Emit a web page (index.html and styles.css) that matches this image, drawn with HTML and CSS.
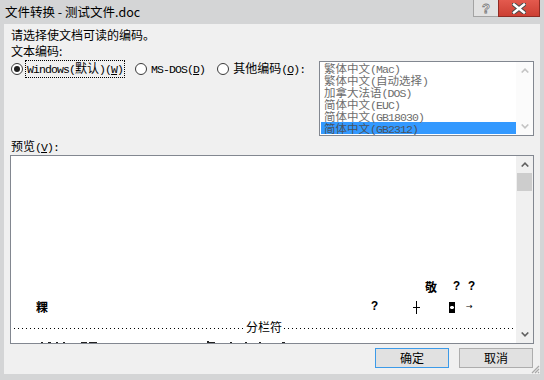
FILE: index.html
```html
<!DOCTYPE html>
<html>
<head>
    <meta charset="utf-8">
    <title>文件转换</title>
    <link rel="stylesheet" href="styles.css">
</head>
<body>
    <div class="window">
        <div class="titlebar">
            <span class="title">文件转换 - 测试文件.doc</span>
            <div class="caption-buttons">
                <span class="help">?</span>
                <span class="close">
                    <svg width="14" height="11" viewBox="0 0 14 11">
                        <path d="M2 1.5 L12 9.5 M12 1.5 L2 9.5" stroke="#4a4a4a" stroke-width="4.4" stroke-linecap="square"/>
                        <path d="M2 1.5 L12 9.5 M12 1.5 L2 9.5" stroke="#fff" stroke-width="2.4" stroke-linecap="square"/>
                    </svg>
                </span>
            </div>
        </div>

        <div class="client">
            <p class="line">请选择使文档可读的编码。</p>
            <p class="line">文本编码:</p>

            <div class="encoding-row">
                <div class="radios">
                    <label class="radio checked">
                        <span class="circle"></span>
                        <span class="text focus"><span class="en">Windows(</span>默认<span class="en">)(<u>W</u>)</span></span>
                    </label>
                    <label class="radio">
                        <span class="circle"></span>
                        <span class="text"><span class="en">MS-DOS(<u>D</u>)</span></span>
                    </label>
                    <label class="radio">
                        <span class="circle"></span>
                        <span class="text">其他编码<span class="en">(<u>O</u>):</span></span>
                    </label>
                </div>

                <div class="listbox">
                    <div class="items">
                        <div class="item">繁体中文<span class="en">(Mac)</span></div>
                        <div class="item">繁体中文<span class="en">(</span>自动选择<span class="en">)</span></div>
                        <div class="item">加拿大法语<span class="en">(DOS)</span></div>
                        <div class="item">简体中文<span class="en">(EUC)</span></div>
                        <div class="item">简体中文<span class="en">(GB18030)</span></div>
                        <div class="item selected">简体中文<span class="en">(GB2312)</span></div>
                    </div>
                    <div class="scrollbar disabled">
                        <span class="sb-btn"><svg width="8" height="5" viewBox="0 0 8 5"><path d="M0.7 4.5 L4 1.2 L7.3 4.5" fill="none" stroke="currentColor" stroke-width="1.6"/></svg></span>
                        <span class="sb-btn"><svg width="8" height="5" viewBox="0 0 8 5"><path d="M0.7 0.5 L4 3.8 L7.3 0.5" fill="none" stroke="currentColor" stroke-width="1.6"/></svg></span>
                    </div>
                </div>
            </div>

            <p class="line preview-label">预览<span class="en">(<u>V</u>):</span></p>

            <div class="preview">
                <div class="page">
                    <div class="row">
                        <span class="cj jing">敬</span>
                        <span class="hw q1">?</span>
                        <span class="hw q2">?</span>
                    </div>
                    <div class="row">
                        <span class="cj guo">粿</span>
                        <span class="hw q3">?</span>
                        <span class="cross"></span>
                        <span class="mark"></span>
                        <span class="hw arrow">→</span>
                    </div>
                    <div class="row break">
                        <span class="dots"></span>
                        <span class="break-label">分栏符</span>
                        <span class="dots"></span>
                    </div>
                    <div class="row clipped">
                        <span class="frag f1"></span>
                        <span class="frag f2"></span>
                        <span class="frag f3"></span>
                        <span class="frag f4"></span>
                        <span class="frag f5"></span>
                        <span class="frag f6"></span>
                        <span class="frag f7 tall"></span>
                        <span class="frag f8"></span>
                        <span class="frag f9"></span>
                        <span class="frag f10"></span>
                        <span class="frag f11"></span>
                        <span class="frag f12"></span>
                    </div>
                </div>
                <div class="scrollbar">
                    <span class="sb-btn"><svg width="8" height="5" viewBox="0 0 8 5"><path d="M0.7 4.5 L4 1.2 L7.3 4.5" fill="none" stroke="currentColor" stroke-width="1.6"/></svg></span>
                    <span class="thumb"></span>
                    <span class="sb-track"></span>
                    <span class="sb-btn"><svg width="8" height="5" viewBox="0 0 8 5"><path d="M0.7 0.5 L4 3.8 L7.3 0.5" fill="none" stroke="currentColor" stroke-width="1.6"/></svg></span>
                </div>
            </div>

            <div class="buttons">
                <button class="btn default">确定</button>
                <button class="btn">取消</button>
            </div>

            <svg class="grip" width="10" height="10" viewBox="0 0 10 10">
                <path d="M9 2 L2 9 M9 5 L5 9 M9 8 L8 9" stroke="#a8a8a8" stroke-width="1.2"/>
            </svg>
        </div>
    </div>
</body>
</html>
```

FILE: styles.css
```css
body {
    margin: 0;
    width: 544px;
    height: 380px;
    overflow: hidden;
    font-family: "Noto Sans CJK SC", "Noto Sans", sans-serif;
    font-size: 12px;
    color: #000;
}
.window {
    height: 380px;
    box-sizing: border-box;
    padding: 0 4px 6px 4px;
    background-color: #d4d5d6;
    display: flex;
    flex-direction: column;
}
.titlebar {
    height: 24px;
    display: flex;
    justify-content: space-between;
    align-items: flex-start;
}
.title {
    margin-left: 1px;
    line-height: 24px;
    font-size: 12.5px;
}
.caption-buttons {
    display: flex;
}
.help, .close {
    height: 17px;
    box-sizing: border-box;
    display: flex;
    align-items: center;
    justify-content: center;
}
.help {
    width: 25px;
    border: 1px solid #a3a3a3;
    border-top: none;
    border-right: none;
    background-color: #e2e2e2;
    font-family: "Liberation Sans", sans-serif;
    font-weight: bold;
    font-size: 13px;
    color: #f6f6f6;
    -webkit-text-stroke: 0.8px #7c7c7c;
}
.close {
    width: 42px;
    border: 1px solid #8e2c24;
    border-top: none;
    background: linear-gradient(#e35a4e, #cc3f33);
}

.client {
    flex: 1;
    position: relative;
    background-color: #f0f0f0;
    padding: 3px 6px 6px 6px;
    display: flex;
    flex-direction: column;
}
.line {
    margin: 0;
    height: 16px;
    line-height: 16px;
    padding-left: 1px;
}
.en {
    font-family: "Liberation Mono", monospace;
    font-size: 11.5px;
    letter-spacing: -0.9px;
}

.encoding-row {
    display: flex;
    align-items: flex-start;
    margin-top: 2px;
}
.radios {
    display: flex;
    align-items: center;
    height: 16px;
}
.radio {
    display: flex;
    align-items: center;
    margin-left: 10px;
}
.radio:first-child {
    margin-left: 1px;
}
.circle {
    width: 12px;
    height: 12px;
    box-sizing: border-box;
    border: 1px solid #3a3a3a;
    border-radius: 50%;
    background: #fff;
    display: flex;
    align-items: center;
    justify-content: center;
}
.checked .circle::after {
    content: "";
    width: 6px;
    height: 6px;
    border-radius: 50%;
    background-color: #1e1e1e;
}
.radio .text {
    margin-left: 2px;
    padding: 0 1px;
    line-height: 14px;
    border: 1px dotted transparent;
    white-space: nowrap;
}
.radio .text.focus {
    border-color: #000;
}

.listbox {
    margin-left: auto;
    width: 215px;
    height: 75px;
    box-sizing: border-box;
    border: 1px solid #828790;
    background-color: #fff;
    display: flex;
}
.items {
    flex: 1;
    padding-left: 1px;
}
.item {
    height: 12px;
    line-height: 12px;
    padding-left: 3px;
    color: #6d6d6d;
    font-size: 11.5px;
    white-space: nowrap;
}
.item.selected {
    background-color: #3399ff;
    color: #4a5360;
}

.scrollbar {
    width: 17px;
    display: flex;
    flex-direction: column;
    justify-content: space-between;
    background-color: #f0f0f0;
    color: #606060;
}
.scrollbar.disabled {
    background-color: #fbfbfb;
    color: #c4c4c4;
}
.sb-btn {
    height: 17px;
    display: flex;
    align-items: center;
    justify-content: center;
}
.thumb {
    height: 18px;
    margin: 0 1px;
    background-color: #cdcdcd;
}
.sb-track {
    flex: 1;
}

.preview-label {
    margin-top: 2px;
}
.preview {
    margin-top: 1px;
    height: 189px;
    box-sizing: border-box;
    border: 1px solid #828790;
    background-color: #fff;
    display: flex;
}
.page {
    flex: 1;
    overflow: hidden;
    padding-top: 121px;
}
.row {
    height: 20px;
    display: flex;
    align-items: center;
    line-height: 12px;
    font-weight: bold;
}
.cj {
    width: 12px;
    text-align: center;
}
.hw {
    width: 6px;
    text-align: center;
    font-family: "Liberation Mono", monospace;
}
.jing { margin-left: 414px; }
.q1 { margin-left: 16px; }
.q2 { margin-left: 9px; }
.guo { margin-left: 25px; }
.q3 { margin-left: 323px; }
.cross {
    margin-left: 36px;
    width: 7px;
    height: 13px;
    background:
        linear-gradient(#000, #000) center / 1px 13px no-repeat,
        linear-gradient(#000, #000) 0 6px / 7px 1px no-repeat;
}
.mark {
    margin-left: 29px;
    width: 6px;
    height: 11px;
    background: radial-gradient(circle, #fff 1.6px, #000 2px);
}
.arrow {
    margin-left: 11px;
    font-size: 8px;
    font-weight: normal;
    font-family: "DejaVu Sans", sans-serif;
}
.break {
    padding: 0 2px 0 3px;
    font-weight: normal;
}
.dots {
    flex: 1;
    height: 1px;
    margin-top: 2px;
    background-image: linear-gradient(to right, #000 1px, transparent 1px);
    background-size: 4px 1px;
}
.break-label {
    padding: 0 2px;
}
.clipped {
    align-items: flex-start;
}
.frag {
    margin-top: 5px;
    height: 2px;
    width: 2px;
    background-color: #222;
}
.frag.tall { height: 4px; margin-top: 4px; }
.f1 { margin-left: 30px; }
.f2 { margin-left: 5px; width: 3px; }
.f3 { margin-left: 5px; }
.f4 { margin-left: 5px; }
.f5 { margin-left: 16px; width: 6px; }
.f6 { margin-left: 2px; width: 8px; }
.f7 { margin-left: 110px; }
.f8 { margin-left: 0; width: 6px; }
.f9 { margin-left: 15px; }
.f10 { margin-left: 13px; }
.f11 { margin-left: 12px; }
.f12 { margin-left: 21px; width: 3px; }

.buttons {
    display: flex;
    justify-content: flex-end;
    gap: 10px;
    margin-top: 4px;
    padding-right: 1px;
}
.btn {
    width: 74px;
    height: 20px;
    box-sizing: border-box;
    border: 1px solid #adadad;
    background-color: #e1e1e1;
    font-family: "Noto Sans CJK SC", sans-serif;
    font-size: 12px;
    line-height: 16px;
    padding: 0;
    color: #000;
}
.btn.default {
    border-color: #3c9ae8;
}
.grip {
    position: absolute;
    right: 0;
    bottom: 0;
}
```
